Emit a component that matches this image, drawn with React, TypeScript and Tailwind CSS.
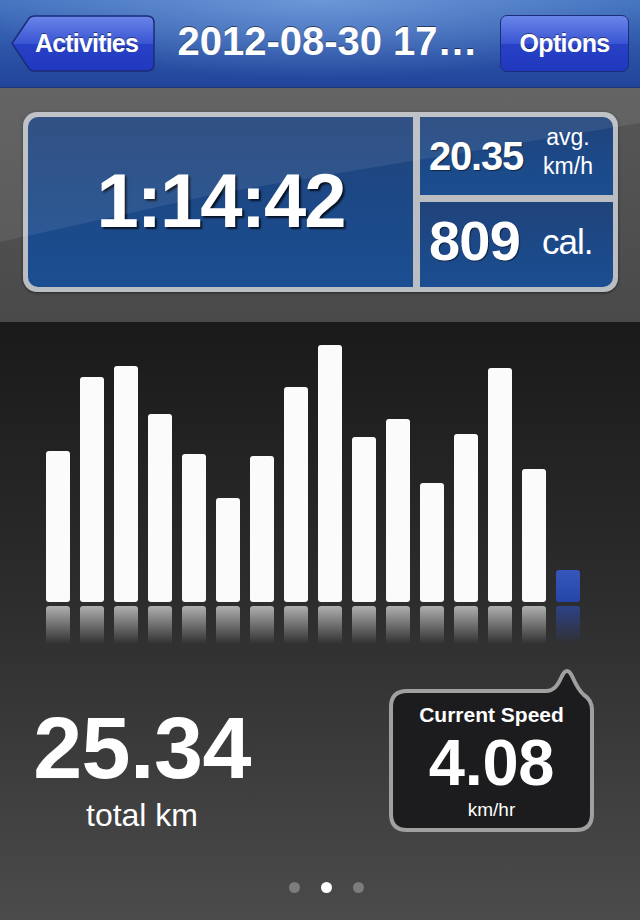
const bars = [151, 225, 236, 188, 148, 104, 146, 215, 257, 165, 183, 119, 168, 234, 133];

function BackButton() {
  return (
    <button className="relative w-[145px] h-[57px] shrink-0 flex items-center justify-center pl-[8px]">
      <svg className="absolute inset-0" width="145" height="57" viewBox="0 0 145 57">
        <defs>
          <linearGradient id="bb" x1="0" y1="0" x2="0" y2="1">
            <stop offset="0" stopColor="#6a86e8" />
            <stop offset="0.5" stopColor="#3a55d3" />
            <stop offset="0.5" stopColor="#2841c6" />
            <stop offset="1" stopColor="#1f38be" />
          </linearGradient>
        </defs>
        <path
          d="M 2 28.5 L 18.5 4 Q 20.5 1 25 1 H 137 Q 144 1 144 8 V 49 Q 144 56 137 56 H 25 Q 20.5 56 18.5 53 Z"
          fill="url(#bb)"
          stroke="#1b2c78"
          strokeWidth="1.5"
        />
      </svg>
      <span className="relative text-[25px] font-bold tracking-[-0.8px] leading-none [text-shadow:0_-1px_0_rgba(0,0,0,0.45)]">
        Activities
      </span>
    </button>
  );
}

function Bubble() {
  return (
    <div className="relative ml-[105px] w-[205px] h-[167px] flex flex-col items-center pt-[38px]">
      <svg className="absolute inset-0" width="205" height="167" viewBox="0 0 205 167">
        <path
          d="M 18 26 H 157 C 165 26 169 20 173 11 Q 178 1 183 11 C 187 20 190 26 195 30 Q 203 35 203 45 V 149 Q 203 165 187 165 H 18 Q 2 165 2 149 V 42 Q 2 26 18 26 Z"
          fill="#1c1c1e"
          stroke="#a0a0a0"
          strokeWidth="4"
        />
      </svg>
      <div className="relative text-[21px] font-bold leading-[1.12]">Current Speed</div>
      <div className="relative text-[65px] font-bold leading-[1.12] tracking-[-0.3px]">4.08</div>
      <div className="relative text-[19px] leading-[1.12]">km/hr</div>
    </div>
  );
}

export default function App() {
  const panelBg = "bg-[linear-gradient(#21437a,#1c4988_55%,#1b4e91)]";
  return (
    <div className="w-[640px] h-[920px] overflow-hidden flex flex-col font-['Liberation_Sans',Arial,sans-serif] text-white select-none">
      {/* Header */}
      <header className="h-[88px] shrink-0 flex items-center pl-[10px] pr-[11px] bg-[radial-gradient(ellipse_55%_90%_at_50%_0%,rgba(140,180,235,0.55),rgba(140,180,235,0)),linear-gradient(#4473bf,#2b53a6_60%,#21449a)] border-b border-[#1c3779]">
        <BackButton />
        <h1 className="flex-1 text-center text-[40px] font-bold leading-none mb-[5px] [text-shadow:0_-1px_0_rgba(0,0,0,0.5)]">
          2012-08-30 17…
        </h1>
        <button className="w-[129px] h-[57px] shrink-0 rounded-[7px] border-[1.5px] border-[#1b2c78] bg-[linear-gradient(#6a86e8,#3a55d3_50%,#2841c6_50%,#1f38be)] text-[25px] font-bold tracking-[-0.6px] leading-none [text-shadow:0_-1px_0_rgba(0,0,0,0.45)]">
          Options
        </button>
      </header>

      {/* Stats */}
      <section className="relative h-[234px] shrink-0 bg-[linear-gradient(#575757,#4a4a4a)] pt-[24px] pl-[23px]">
        <div className="w-[595px] h-[180px] rounded-[14px] bg-[#babec3] p-[5px] flex gap-[7px] shadow-[0_1px_3px_rgba(0,0,0,0.5)]">
          <div className={`w-[385px] rounded-l-[10px] ${panelBg} flex items-center justify-center`}>
            <span className="mb-[3px] text-[76px] font-bold tracking-[-2px] leading-none [text-shadow:2px_2px_2px_rgba(0,0,0,0.75)]">
              1:14:42
            </span>
          </div>
          <div className="flex-1 flex flex-col gap-[7px]">
            <div className={`flex-1 rounded-tr-[10px] ${panelBg} flex items-center pl-[9px]`}>
              <span className="text-[40px] font-bold tracking-[-1.2px] leading-none [text-shadow:1px_1px_1px_rgba(0,0,0,0.5)]">
                20.35
              </span>
              <div className="ml-[20px] mb-[8px] text-center text-[23px] leading-[29px]">
                avg.
                <br />
                km/h
              </div>
            </div>
            <div className={`flex-1 rounded-br-[10px] ${panelBg} flex items-center pl-[9px] pb-[7px]`}>
              <span className="text-[56px] font-bold tracking-[-0.8px] leading-none [text-shadow:1px_1px_1px_rgba(0,0,0,0.5)]">
                809
              </span>
              <span className="ml-[22px] text-[35px] tracking-[-1px] leading-none">cal.</span>
            </div>
          </div>
        </div>
        <div className="pointer-events-none absolute inset-0 bg-white/[0.08] [clip-path:polygon(0_0,100%_0,100%_35px,220px_105px,0_154px)]" />
      </section>

      {/* Chart + totals */}
      <section className="flex-1 flex flex-col bg-[linear-gradient(#1a1a1a,#2c2c2c_45%,#4b4b4b)]">
        <div className="h-[280px] shrink-0 flex items-end gap-[10px] pl-[46px]">
          {bars.map((h, i) => (
            <div key={i} className="w-[24px] rounded-[3px] bg-[#fbfbfb]" style={{ height: h }} />
          ))}
          <div className="w-[24px] h-[32px] rounded-[3px] bg-[linear-gradient(#3557bc,#2445a8)]" />
        </div>
        <div className="mt-[4px] h-[38px] shrink-0 flex gap-[10px] pl-[46px]">
          {bars.map((_, i) => (
            <div
              key={i}
              className="w-[24px] h-full rounded-t-[3px] bg-[linear-gradient(rgba(255,255,255,0.62),rgba(255,255,255,0))]"
            />
          ))}
          <div className="w-[24px] h-full rounded-t-[3px] bg-[linear-gradient(rgba(45,75,175,0.7),rgba(45,75,175,0))]" />
        </div>

        <div className="mt-[21px] h-[167px] shrink-0 flex items-start">
          <div className="w-[284px] pt-[34px] flex flex-col items-center">
            <div className="text-[88px] font-bold leading-[1.12] tracking-[-0.5px]">25.34</div>
            <div className="text-[32px] leading-[1.12]">total km</div>
          </div>
          <Bubble />
        </div>

        <div className="mt-[50px] flex justify-center gap-[21px] pl-[12px]">
          <div className="w-[11px] h-[11px] rounded-full bg-[#7c7c7c]" />
          <div className="w-[11px] h-[11px] rounded-full bg-white" />
          <div className="w-[11px] h-[11px] rounded-full bg-[#7c7c7c]" />
        </div>
      </section>
    </div>
  );
}
